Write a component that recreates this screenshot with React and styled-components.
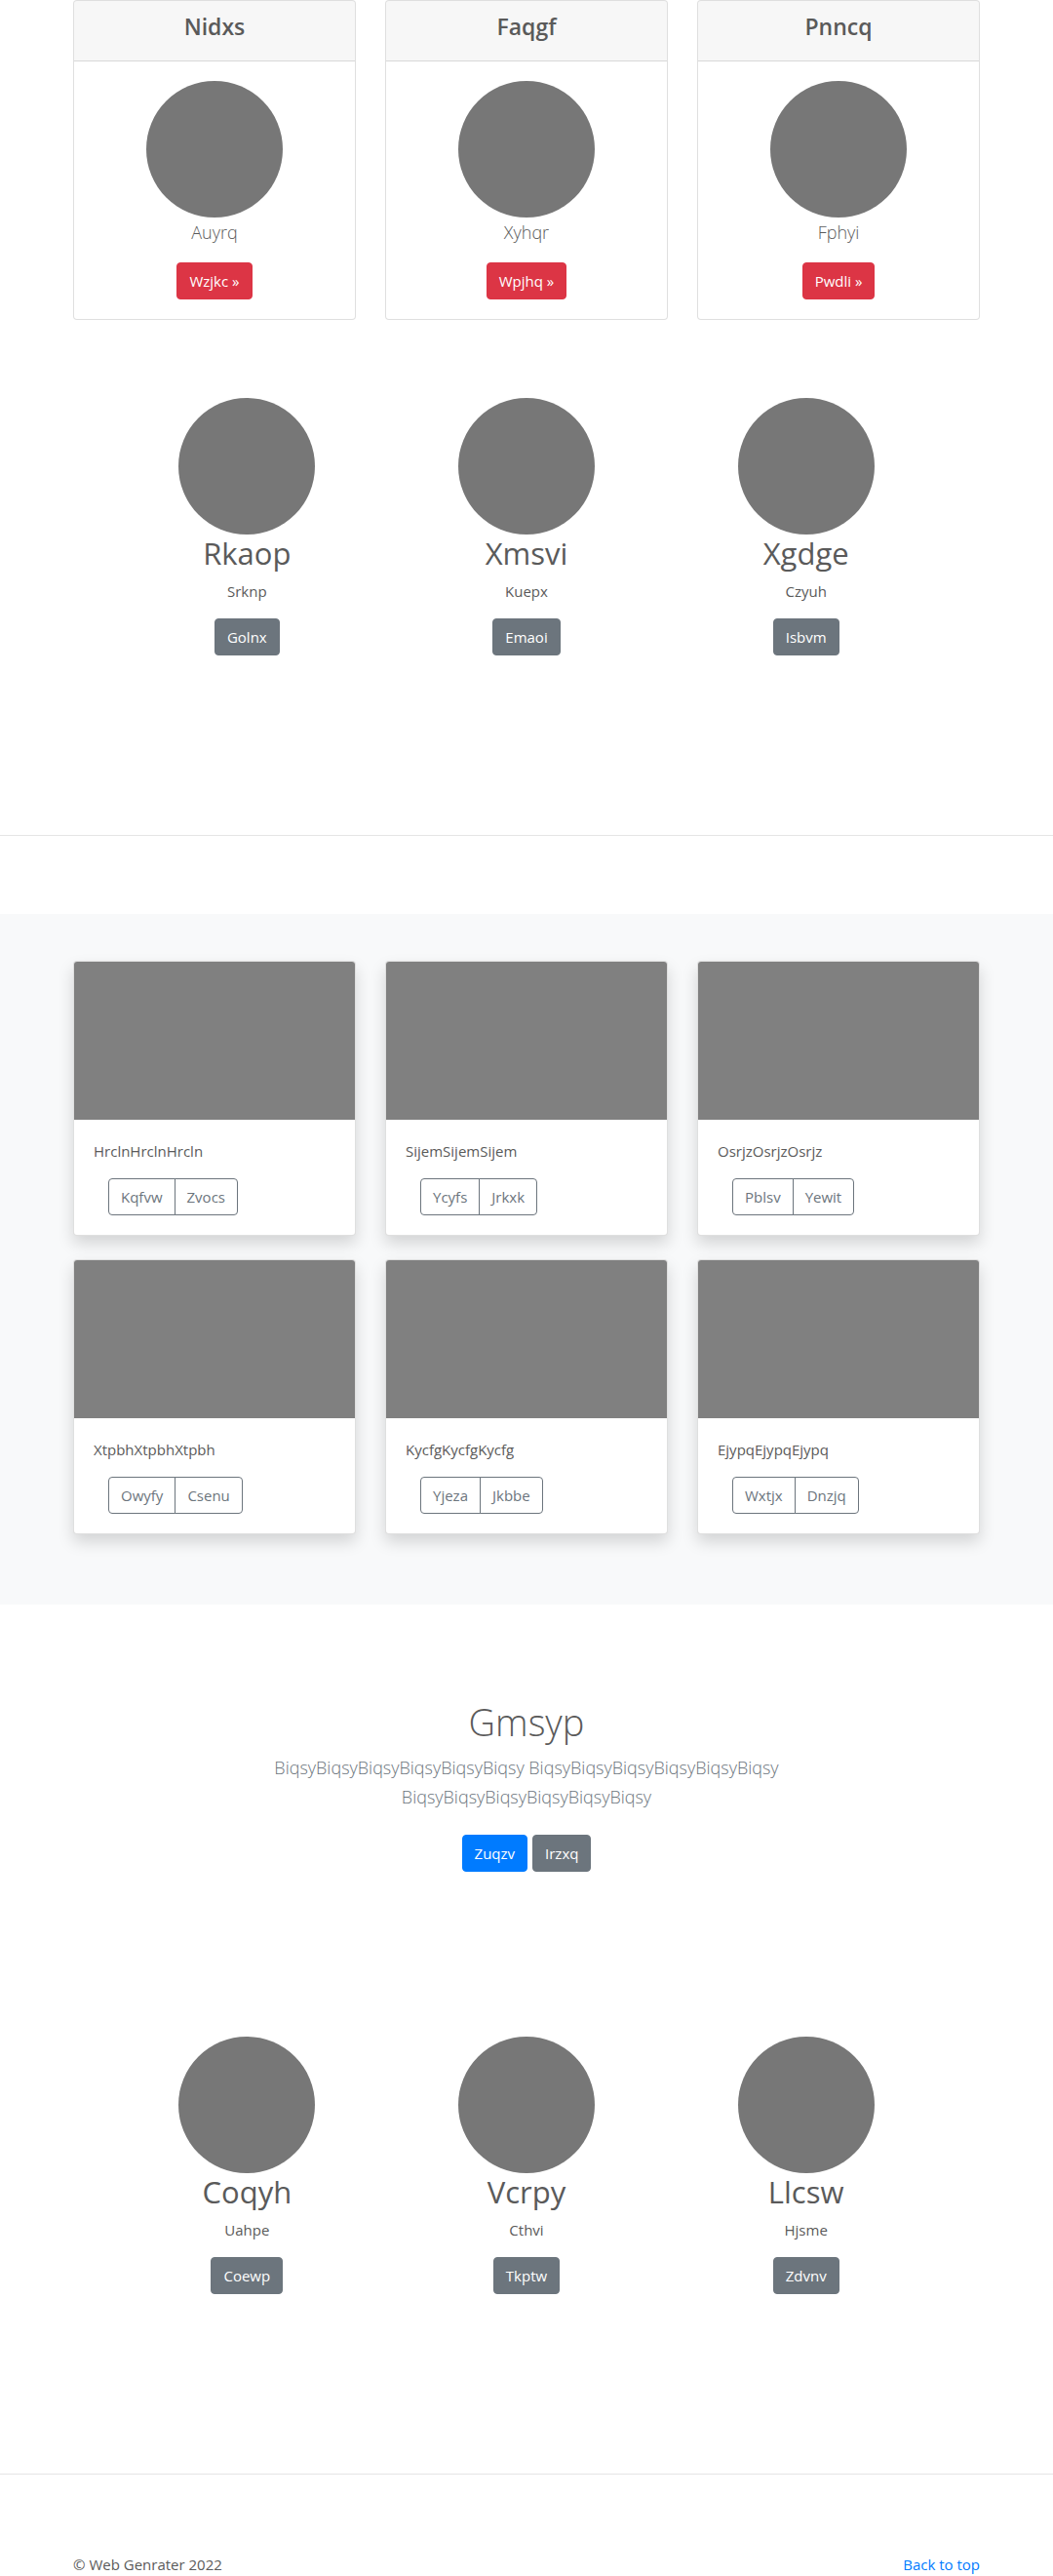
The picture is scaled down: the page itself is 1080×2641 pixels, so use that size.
import React from "react";
import styled, { createGlobalStyle, css } from "styled-components";

const GlobalStyle = createGlobalStyle`
  *, *::before, *::after { box-sizing: border-box; }
  body {
    margin: 0;
    background: #fff;
    color: #5a5a5a;
    font-family: "Segoe UI", "Open Sans", "Noto Sans", sans-serif;
    font-size: 15px;
    line-height: 24px;
  }
  h1, h2, h3, p { margin: 0; }
`;

const Container = styled.div`
  max-width: 960px;
  margin: 0 auto;
  padding: 0 15px;
`;

const CardGrid = styled.div`
  display: grid;
  grid-template-columns: repeat(3, 1fr);
  gap: 24px 30px;
`;

const Card = styled.article`
  display: flex;
  flex-direction: column;
  overflow: hidden;
  background: #fff;
  background-clip: border-box;
  border: 1px solid rgba(0, 0, 0, 0.125);
  border-radius: 4px;
  ${(p) => p.$raised && css`box-shadow: 0 8px 16px rgba(0, 0, 0, 0.15);`}
`;

const CardHeader = styled.header`
  padding: 12px 20px 20px;
  background: rgba(0, 0, 0, 0.03);
  border-bottom: 1px solid rgba(0, 0, 0, 0.125);
  text-align: center;
`;

const CardTitle = styled.h2`
  font-size: 23px;
  font-weight: 600;
  line-height: 29px;
`;

const CardBody = styled.div`
  display: flex;
  flex-direction: column;
  align-items: ${(p) => (p.$start ? "flex-start" : "center")};
  padding: 20px;
`;

const Thumbnail = styled.div`
  height: 162px;
  background: #808080;
`;

const Avatar = styled.div`
  width: 140px;
  height: 140px;
  border-radius: 50%;
  background: #777;
`;

const Lead = styled.p`
  margin-bottom: 16px;
  color: ${(p) => (p.$muted ? "#6c757d" : "inherit")};
  font-size: 18px;
  font-weight: 300;
  line-height: 30px;
`;

const Text = styled.p`
  margin-bottom: 16px;
`;

const tones = { danger: "#dc3545", secondary: "#6c757d", primary: "#007bff" };

const Button = styled.button`
  padding: 6px 12px;
  border: 1px solid ${(p) => tones[p.$tone]};
  border-radius: 4px;
  background: ${(p) => tones[p.$tone]};
  color: #fff;
  font: inherit;
  cursor: pointer;
`;

const ButtonGroup = styled.div`
  display: flex;
  margin-left: 15px;
`;

const OutlineButton = styled.button`
  padding: 6px 12px;
  border: 1px solid #6c757d;
  border-radius: 4px;
  background: transparent;
  color: #6c757d;
  font: inherit;
  cursor: pointer;

  &:not(:last-child) {
    border-top-right-radius: 0;
    border-bottom-right-radius: 0;
  }
  &:not(:first-child) {
    margin-left: -1px;
    border-top-left-radius: 0;
    border-bottom-left-radius: 0;
  }
`;

const Features = styled.section`
  display: grid;
  grid-template-columns: repeat(3, 1fr);
  max-width: 860px;
  margin: 0 auto;
  padding: ${(p) => p.$top}px 0 184px;
`;

const Feature = styled.div`
  display: flex;
  flex-direction: column;
  align-items: center;
`;

const FeatureTitle = styled.h2`
  margin-bottom: 8px;
  font-size: 31px;
  font-weight: 400;
  line-height: 38px;
`;

const Divider = styled.hr`
  margin: 0 0 80px;
  border: 0;
  border-top: 1px solid rgba(0, 0, 0, 0.1);
`;

const Album = styled.section`
  padding: 48px 0 72px;
  background: #f8f9fa;
`;

const Intro = styled.section`
  display: flex;
  flex-direction: column;
  align-items: center;
  max-width: 610px;
  margin: 0 auto;
  padding: 96px 15px 0;
  text-align: center;
`;

const IntroTitle = styled.h1`
  margin-bottom: 8px;
  font-size: 38px;
  font-weight: 300;
  line-height: 48px;
`;

const Actions = styled.div`
  display: flex;
  gap: 5px;
  margin-top: 8px;
`;

const Footer = styled.footer`
  display: flex;
  justify-content: space-between;
`;

const TopLink = styled.a`
  color: #007bff;
  text-decoration: none;
`;

const plans = [
  ["Nidxs", "Auyrq", "Wzjkc »"],
  ["Faqgf", "Xyhqr", "Wpjhq »"],
  ["Pnncq", "Fphyi", "Pwdli »"],
];
const upperFeatures = [
  ["Rkaop", "Srknp", "Golnx"],
  ["Xmsvi", "Kuepx", "Emaoi"],
  ["Xgdge", "Czyuh", "Isbvm"],
];
const lowerFeatures = [
  ["Coqyh", "Uahpe", "Coewp"],
  ["Vcrpy", "Cthvi", "Tkptw"],
  ["Llcsw", "Hjsme", "Zdvnv"],
];
const album = [
  ["HrclnHrclnHrcln", "Kqfvw", "Zvocs"],
  ["SijemSijemSijem", "Ycyfs", "Jrkxk"],
  ["OsrjzOsrjzOsrjz", "Pblsv", "Yewit"],
  ["XtpbhXtpbhXtpbh", "Owyfy", "Csenu"],
  ["KycfgKycfgKycfg", "Yjeza", "Jkbbe"],
  ["EjypqEjypqEjypq", "Wxtjx", "Dnzjq"],
];

function FeatureRow({ items, top }) {
  return (
    <Features $top={top}>
      {items.map(([title, text, action]) => (
        <Feature key={title}>
          <Avatar />
          <FeatureTitle>{title}</FeatureTitle>
          <Text>{text}</Text>
          <Button type="button" $tone="secondary">{action}</Button>
        </Feature>
      ))}
    </Features>
  );
}

export default function App() {
  return (
    <>
      <GlobalStyle />
      <main>
        <Container>
          <CardGrid>
            {plans.map(([title, text, action]) => (
              <Card key={title}>
                <CardHeader>
                  <CardTitle>{title}</CardTitle>
                </CardHeader>
                <CardBody>
                  <Avatar />
                  <Lead>{text}</Lead>
                  <Button type="button" $tone="danger">{action}</Button>
                </CardBody>
              </Card>
            ))}
          </CardGrid>
        </Container>

        <FeatureRow items={upperFeatures} top={80} />
        <Divider />

        <Album>
          <Container>
            <CardGrid>
              {album.map(([text, first, second]) => (
                <Card key={text} $raised>
                  <Thumbnail />
                  <CardBody $start>
                    <Text>{text}</Text>
                    <ButtonGroup role="group">
                      <OutlineButton type="button">{first}</OutlineButton>
                      <OutlineButton type="button">{second}</OutlineButton>
                    </ButtonGroup>
                  </CardBody>
                </Card>
              ))}
            </CardGrid>
          </Container>
        </Album>

        <Intro>
          <IntroTitle>Gmsyp</IntroTitle>
          <Lead $muted>
            BiqsyBiqsyBiqsyBiqsyBiqsyBiqsy BiqsyBiqsyBiqsyBiqsyBiqsyBiqsy
            BiqsyBiqsyBiqsyBiqsyBiqsyBiqsy
          </Lead>
          <Actions>
            <Button type="button" $tone="primary">Zuqzv</Button>
            <Button type="button" $tone="secondary">Irzxq</Button>
          </Actions>
        </Intro>

        <FeatureRow items={lowerFeatures} top={169} />
        <Divider />
      </main>

      <Container>
        <Footer>
          <p>© Web Genrater 2022</p>
          <TopLink href="#">Back to top</TopLink>
        </Footer>
      </Container>
    </>
  );
}
